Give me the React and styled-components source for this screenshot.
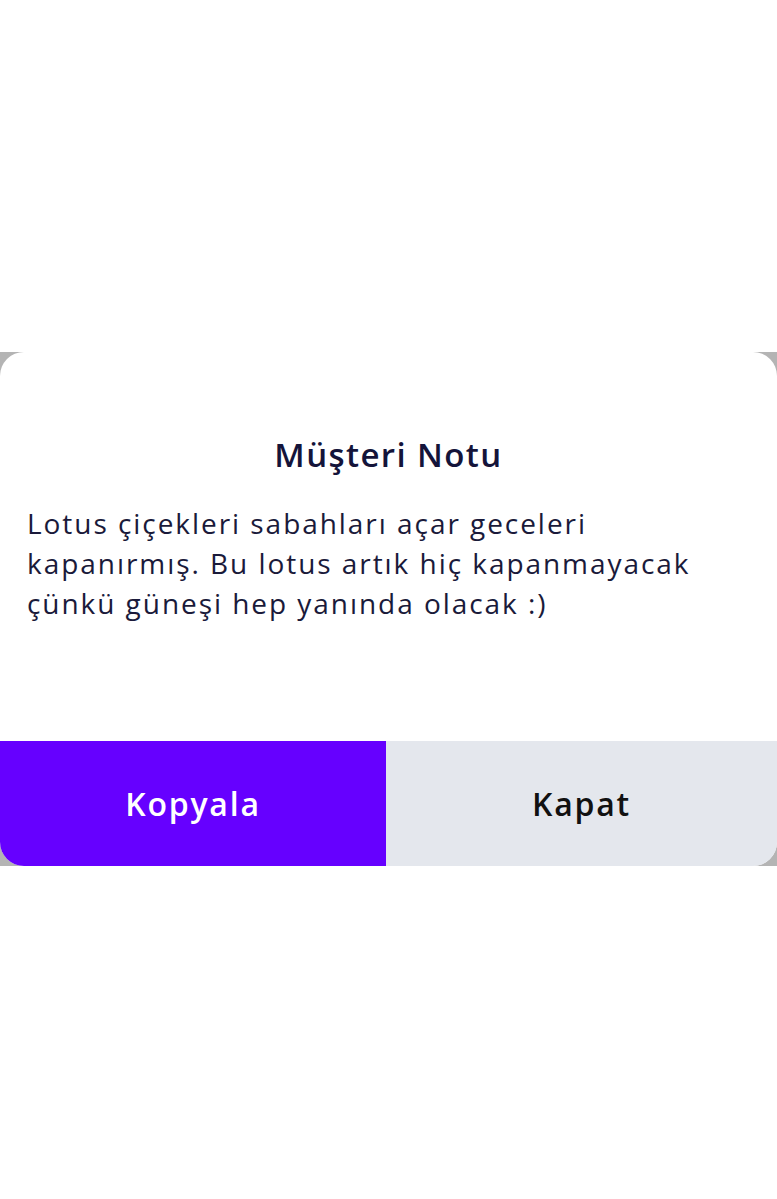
import React from "react";
import styled, { createGlobalStyle } from "styled-components";

const Global = createGlobalStyle`
  html, body { margin: 0; padding: 0; background: #ffffff; }
  body { font-family: "Open Sans", "Noto Sans", sans-serif; }
`;

const Page = styled.div`
  width: 777px;
  min-height: 1199px;
  padding-top: 352px;
  box-sizing: border-box;
  background: #ffffff;
`;

const Backdrop = styled.div`
  background: #b4b4b4;
`;

const Card = styled.div`
  background: #ffffff;
  border-radius: 24px;
  overflow: hidden;
  display: flex;
  flex-direction: column;
  height: 514px;
`;

const Body = styled.div`
  flex: 1;
  padding: 83px 27px 0;
`;

const Title = styled.h2`
  margin: 0 0 28px;
  text-align: center;
  font-size: 33px;
  font-weight: 600;
  letter-spacing: 1.4px;
  color: #14143a;
  line-height: 40px;
`;

const Note = styled.p`
  margin: 0;
  font-size: 28px;
  font-weight: 500;
  letter-spacing: 1.95px;
  line-height: 40px;
  color: #1a1a3a;
`;

const Actions = styled.div`
  display: grid;
  grid-template-columns: 386px 1fr;
  height: 125px;
`;

const Action = styled.button`
  border: none;
  margin: 0;
  padding: 0;
  font-family: inherit;
  font-size: 32px;
  font-weight: 600;
  letter-spacing: 1.8px;
  background: ${(p) => (p.$primary ? "#6600ff" : "#e4e7ed")};
  color: ${(p) => (p.$primary ? "#ffffff" : "#111111")};
  cursor: pointer;
`;

export default function App() {
  return (
    <>
      <Global />
      <Page>
        <Backdrop>
          <Card>
            <Body>
              <Title>Müşteri Notu</Title>
              <Note>
                Lotus çiçekleri sabahları açar geceleri kapanırmış. Bu lotus artık hiç kapanmayacak çünkü güneşi hep yanında olacak :)
              </Note>
            </Body>
            <Actions>
              <Action $primary>Kopyala</Action>
              <Action>Kapat</Action>
            </Actions>
          </Card>
        </Backdrop>
      </Page>
    </>
  );
}
